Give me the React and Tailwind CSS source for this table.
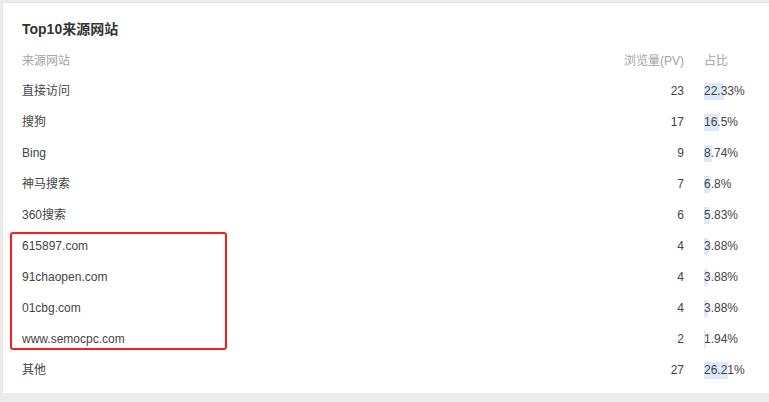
const rows = [
  { name: '直接访问', pv: 23, pct: 22.33, pctText: '22.33%' },
  { name: '搜狗', pv: 17, pct: 16.5, pctText: '16.5%' },
  { name: 'Bing', pv: 9, pct: 8.74, pctText: '8.74%' },
  { name: '神马搜索', pv: 7, pct: 6.8, pctText: '6.8%' },
  { name: '360搜索', pv: 6, pct: 5.83, pctText: '5.83%' },
  { name: '615897.com', pv: 4, pct: 3.88, pctText: '3.88%' },
  { name: '91chaopen.com', pv: 4, pct: 3.88, pctText: '3.88%' },
  { name: '01cbg.com', pv: 4, pct: 3.88, pctText: '3.88%' },
  { name: 'www.semocpc.com', pv: 2, pct: 1.94, pctText: '1.94%' },
  { name: '其他', pv: 27, pct: 26.21, pctText: '26.21%' },
];

const font = { fontFamily: '"Liberation Sans", "Noto Sans CJK SC", sans-serif' };

const App = () => {
  return (
    <div className="w-[769px] h-[402px] overflow-hidden bg-[#ececec] pt-[2px] pl-[2px]" style={font}>
      <div className="relative w-[780px] h-[391px] bg-white border-l border-t border-[#e4e4e4] pl-[19px] pt-[16px]">
        <h2 className="h-[20px] leading-[20px] text-[14px] font-bold text-[#333]">Top10来源网站</h2>

        <div className="mt-[7px] flex items-center h-[29px] text-[12px] text-[#a3a3a3]">
          <span className="flex-1">来源网站</span>
          <span className="text-right">浏览量(PV)</span>
          <span className="ml-[20px] w-[78px]">占比</span>
        </div>

        {rows.map((row) => (
          <div key={row.name} className="flex items-center h-[31px] text-[12px] text-[#444]">
            <span className="flex-1">{row.name}</span>
            <span className="text-right">{row.pv}</span>
            <span className="ml-[20px] w-[78px]">
              <span className="relative inline-block leading-[17px]">
                <span
                  className="absolute left-0 top-0 h-full bg-[#dce9fb]"
                  style={{ width: `${row.pct * 0.91}px` }}
                />
                <span className="relative">{row.pctText}</span>
              </span>
            </span>
          </div>
        ))}

        <div className="absolute left-[7px] top-[229px] w-[217px] h-[118px] border-2 border-[#ff1a1a] rounded-[3px]" />
      </div>
    </div>
  );
};

export default App;
